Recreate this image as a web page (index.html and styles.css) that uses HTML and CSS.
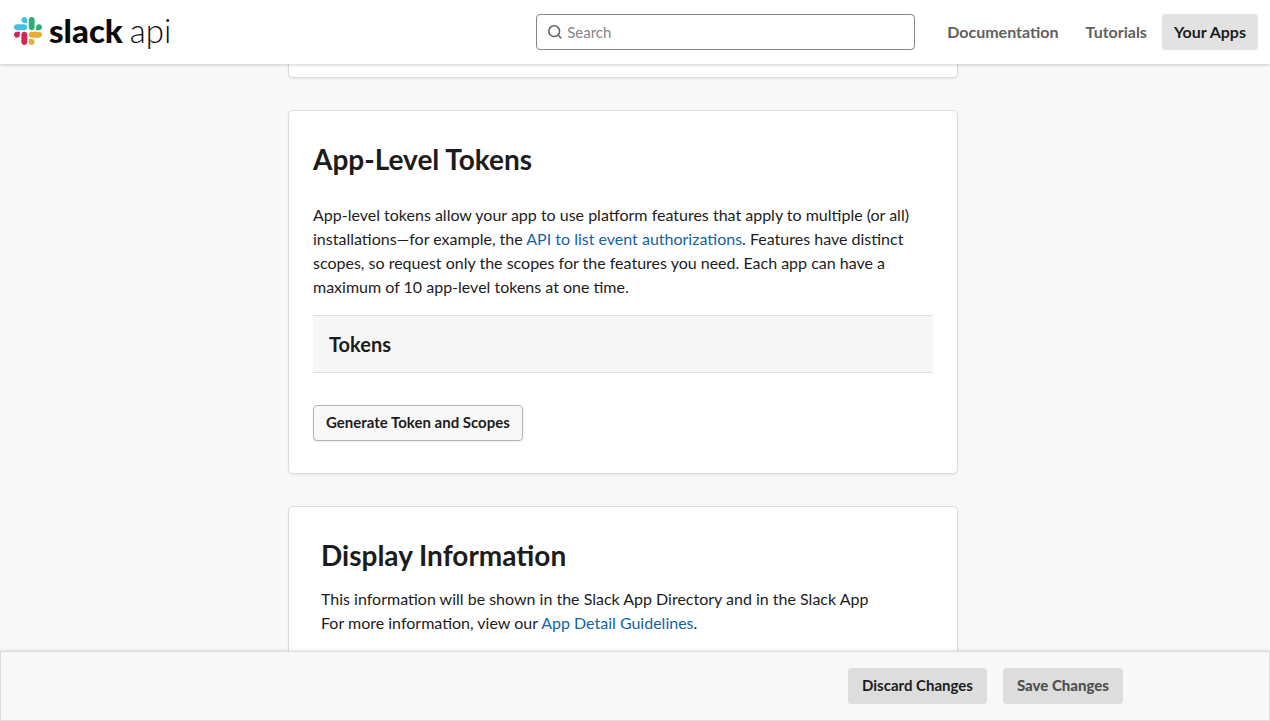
FILE: index.html
```html
<!DOCTYPE html>
<html lang="en">
<head>
<meta charset="utf-8">
<meta name="viewport" content="width=device-width, initial-scale=1">
<title>Slack API: Applications</title>
<link rel="stylesheet" href="styles.css">
</head>
<body class="page">
<header class="topbar">
  <a class="logo" href="#" aria-label="Slack API home">
    <svg class="logo-mark" viewBox="0 0 122.8 122.8" aria-hidden="true">
      <path fill="#d22656" d="M25.8 77.6c0 7.1-5.800 12.900-12.900 12.900S0 84.700 0 77.600s5.800-12.900 12.900-12.900h12.900v12.900zm6.500 0c0-7.100 5.800-12.900 12.900-12.900s12.900 5.800 12.900 12.900v32.300c0 7.100-5.800 12.900-12.900 12.900s-12.900-5.800-12.900-12.900V77.600z"/>
      <path fill="#46c0e2" d="M45.200 25.800c-7.100 0-12.900-5.800-12.900-12.900S38.100 0 45.200 0s12.900 5.800 12.900 12.900v12.900H45.200zm0 6.500c7.100 0 12.900 5.800 12.900 12.900s-5.800 12.900-12.900 12.900H12.900C5.800 58.100 0 52.300 0 45.200s5.800-12.900 12.900-12.900h32.300z"/>
      <path fill="#2cae77" d="M97 45.200c0-7.100 5.800-12.900 12.900-12.900s12.900 5.800 12.900 12.900-5.800 12.900-12.900 12.900H97V45.200zm-6.500 0c0 7.100-5.800 12.900-12.900 12.900s-12.900-5.800-12.900-12.900V12.900C64.700 5.800 70.500 0 77.600 0s12.900 5.800 12.900 12.900v32.300z"/>
      <path fill="#e5ac36" d="M77.600 97c7.100 0 12.900 5.800 12.900 12.900s-5.800 12.900-12.900 12.900-12.900-5.800-12.900-12.900V97h12.900zm0-6.500c-7.100 0-12.900-5.800-12.900-12.900s5.800-12.900 12.900-12.900h32.300c7.100 0 12.900 5.800 12.900 12.900s-5.800 12.900-12.900 12.900H77.600z"/>
    </svg>
    <span class="logo-name">slack</span>
    <span class="logo-product">api</span>
  </a>
  <label class="search">
    <svg class="search-icon" viewBox="0 0 16 16" aria-hidden="true">
      <circle cx="7.200" cy="7.200" r="5.400"/>
      <path d="M11.200 11.200 14 14"/>
    </svg>
    <input class="search-input" type="text" placeholder="Search" aria-label="Search">
  </label>
  <nav class="nav">
    <a class="nav-link" href="#">Documentation</a>
    <a class="nav-link" href="#">Tutorials</a>
    <a class="nav-link nav-link-active" href="#">Your Apps</a>
  </nav>
</header>

<main class="content">
  <section class="card card-previous" aria-hidden="true"></section>

  <section class="card">
    <h2 class="card-title">App-Level Tokens</h2>
    <p class="text tokens-intro">App-level tokens allow your app to use platform features that apply to multiple (or all) installations—for example, the <a class="link" href="#">API to list event authorizations</a>. Features have distinct scopes, so request only the scopes for the features you need. Each app can have a maximum of 10 app-level tokens at one time.</p>
    <table class="tokens">
      <thead><tr><th class="tokens-head" scope="col">Tokens</th></tr></thead>
    </table>
    <button class="button button-outline" type="button">Generate Token and Scopes</button>
  </section>

  <section class="card card-display">
    <h2 class="card-title">Display Information</h2>
    <p class="text display-intro">This information will be shown in the Slack App Directory and in the Slack App<br>For more information, view our <a class="link" href="#">App Detail Guidelines</a>.</p>
  </section>
</main>

<footer class="savebar">
  <button class="button" type="button">Discard Changes</button>
  <button class="button button-save" type="button" disabled>Save Changes</button>
</footer>
</body>
</html>
```
FILE: styles.css
```css
*, *::before, *::after {
  box-sizing: border-box;
}

.page {
  display: flex;
  flex-direction: column;
  height: 100vh;
  margin: 0;
  background: #f8f8f8;
  color: #1d1c1d;
  font-family: Lato, "Liberation Sans", sans-serif;
  font-size: 16px;
  line-height: 24px;
}

/* Top bar */
.topbar {
  z-index: 1;
  display: flex;
  flex: none;
  align-items: center;
  min-height: 64px;
  padding: 0 12px 0 14px;
  background: #fff;
  box-shadow: 0 1px 3px rgba(0, 0, 0, 0.2);
}

.logo {
  display: flex;
  align-items: center;
  padding-bottom: 2px;
  color: #0b0b0b;
  font-size: 33px;
  line-height: 32px;
  text-decoration: none;
}

.logo-mark {
  width: 28px;
  height: 28px;
  margin-right: 7px;
}

.logo-name {
  margin-right: 7px;
  padding-bottom: 2px;
  font-weight: 900;
}

.logo-product {
  padding-bottom: 2px;
  font-weight: 300;
}

.search {
  display: flex;
  flex: 0 1 379px;
  align-items: center;
  gap: 4px;
  height: 36px;
  margin: 0 20px 0 auto;
  padding: 0 10px;
  border: 1px solid #868686;
  border-radius: 4px;
}

.search-icon {
  flex: none;
  width: 16px;
  height: 16px;
  fill: none;
  stroke: #616061;
  stroke-width: 1.5;
  stroke-linecap: round;
}

.search-input {
  flex: 1;
  min-width: 0;
  padding: 0;
  border: 0;
  outline: 0;
  background: none;
  color: inherit;
  font: inherit;
  font-size: 15px;
}

.search-input::placeholder {
  color: #868686;
}

.nav {
  display: flex;
  gap: 3px;
}

.nav-link {
  padding: 6px 12px;
  border-radius: 4px;
  color: #616061;
  font-weight: 700;
  text-decoration: none;
}

.nav-link-active {
  background: #e2e2e2;
  color: #1d1c1d;
}

/* Settings cards */
.content {
  display: flex;
  flex: 1;
  flex-direction: column;
  gap: 32px;
  align-items: center;
  min-height: 0;
  padding-right: 24px;
  overflow: hidden;
}

.card {
  flex: none;
  width: 100%;
  max-width: 670px;
  padding: 32px 24px;
  border: 1px solid #dddddd;
  border-radius: 5px;
  background: #fff;
  box-shadow: 0 1px 2px rgba(0, 0, 0, 0.08);
}

.card-previous {
  padding: 0 24px 13px;
  border-top: 0;
  border-radius: 0 0 5px 5px;
}

.card-display {
  padding: 32px;
}

.card-title {
  margin: 0;
  font-size: 28px;
  font-weight: 700;
  line-height: 32px;
}

.text {
  margin: 0;
}

.tokens-intro {
  padding: 28px 0 16px;
}

.display-intro {
  padding-top: 16px;
}

.link {
  color: #1264a3;
  text-decoration: none;
}

.tokens {
  width: 100%;
  margin-bottom: 32px;
  border-spacing: 0;
}

.tokens-head {
  padding: 16px;
  border: solid #dddddd;
  border-width: 1px 0;
  background: #f6f6f6;
  font-size: 20px;
  font-weight: 700;
  text-align: left;
}

/* Buttons */
.button {
  display: block;
  height: 36px;
  padding: 0 14px 2px;
  border: 0;
  border-radius: 4px;
  background: #dddddd;
  color: #1d1c1d;
  font: inherit;
  font-size: 15px;
  font-weight: 700;
}

.button-outline {
  padding: 0 12px 2px;
  border: 1px solid #b4b4b4;
  background: #f8f8f8;
  box-shadow: 0 1px 2px rgba(0, 0, 0, 0.08);
}

.button-save {
  color: #505050;
  font-weight: 900;
}

/* Save bar */
.savebar {
  z-index: 1;
  display: flex;
  flex: none;
  gap: 16px;
  justify-content: flex-end;
  padding: 16px 146px 16px 16px;
  border: 1px solid #dddddd;
  background: #f8f8f8;
  box-shadow: 0 0 4px rgba(0, 0, 0, 0.15);
}
```
